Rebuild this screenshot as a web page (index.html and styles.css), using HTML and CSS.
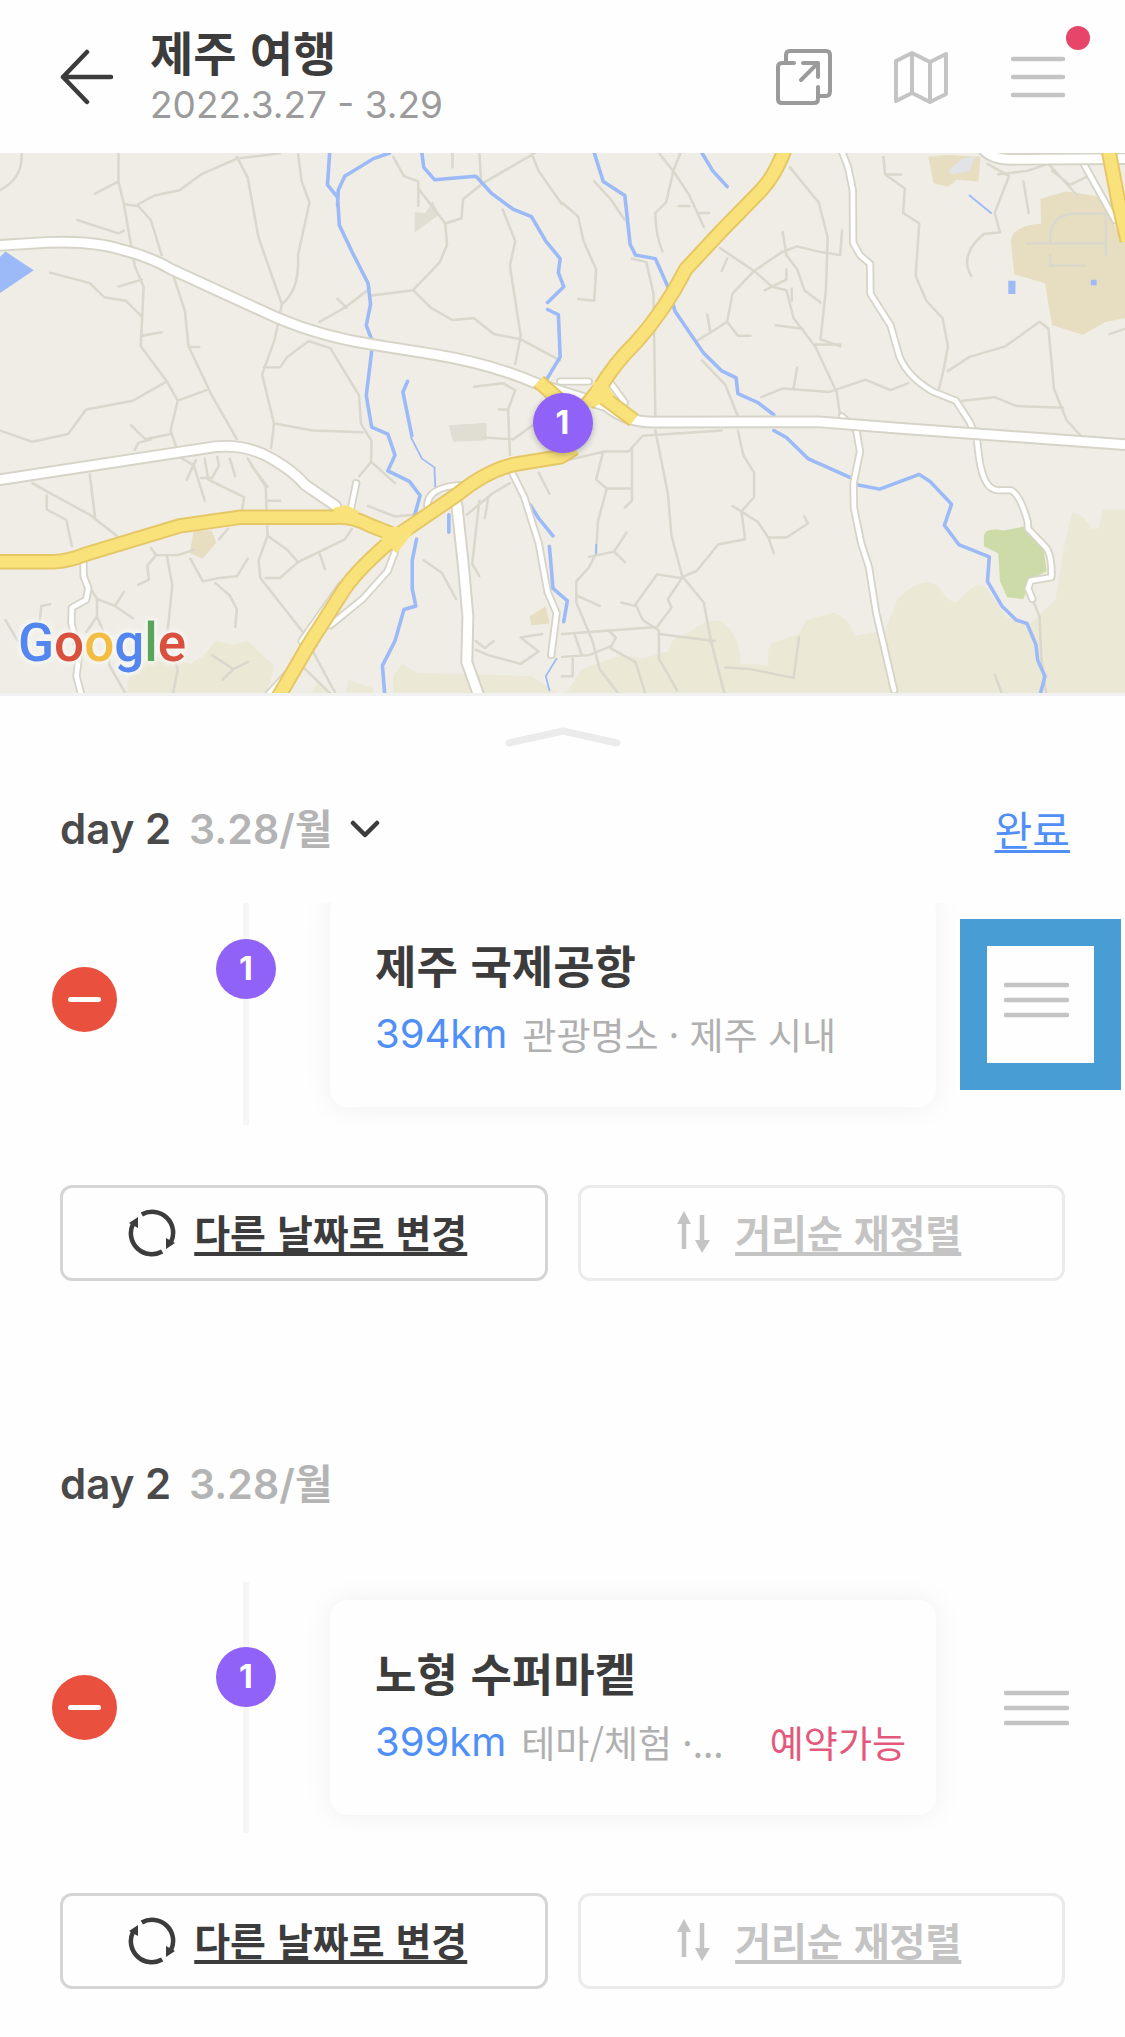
FILE: index.html
```html
<!DOCTYPE html>
<html lang="ko">
  <head>
    <meta charset="UTF-8" />
    <meta name="viewport" content="width=device-width, initial-scale=1.0" />
    <title>제주 여행</title>
    <link rel="stylesheet" href="styles.css">
  </head>
  <body>
    <header class="header">
      <button class="icon-btn back" aria-label="뒤로">
        <svg viewBox="0 0 56 56"><path d="M52 28H4M28 3L4 28l24 25" stroke="#3c3c3c" stroke-width="4.5" /></svg>
      </button>
      <div class="trip">
        <h1>제주 여행</h1>
        <p>2022.3.27 - 3.29</p>
      </div>
      <nav class="actions">
        <button class="icon-btn" aria-label="공유">
          <svg viewBox="0 0 56 56" stroke="#9b9b9b" stroke-width="4">
            <path d="M18 14H6q-4 0-4 4v32q0 4 4 4h32q4 0 4-4V38M10 12V6q0-4 4-4h36q4 0 4 4v36q0 5-4 5h-7M27 14h15v14M25 31l16-16" />
          </svg>
        </button>
        <button class="icon-btn" aria-label="지도">
          <svg viewBox="0 0 56 56" stroke="#c4c4c4" stroke-width="4">
            <path d="M3 12l16-8 18 9 16-8v40l-16 8-18-9-16 8zM19 4v40M37 13v40" />
          </svg>
        </button>
        <button class="icon-btn menu" aria-label="메뉴">
          <svg viewBox="0 0 56 56" stroke="#c4c4c4" stroke-width="4.5"><path d="M3 10h50M3 28h50M3 46h50" /></svg>
          <span class="badge"></span>
        </button>
      </nav>
    </header>

    <section class="map">
      <svg viewBox="0 9 3133 1539" preserveAspectRatio="none">
        <defs>
          <g id="white-roads">
            <path d="M0 272L130 264Q260 258 340 285Q420 305 480 342L770 478Q900 535 1050 557L1210 583Q1370 610 1500 668L1690 730" />
            <path d="M0 940L600 846Q690 838 760 882Q820 918 850 955L935 1015" />
            <path d="M1690 730Q1740 775 1820 776L2280 775L2500 793L3133 840" />
            <path d="M2740 0Q2760 25 2810 27L3133 25" />
            <path d="M1272 1010L1290 1180L1303 1330L1300 1460L1335 1560" />
          </g>
          <g id="small-roads">
            <path d="M232 1165L233 1215L246 1250L240 1282L200 1305L199 1350L220 1440L213 1500L228 1560" />
            <path d="M1100 1145L1080 1200L1010 1280L920 1355M950 1240L840 1400M875 1410L740 1560" />
            <path d="M1190 1015Q1190 960 1285 955M1424 915L1460 990L1500 1120L1525 1260L1550 1320L1535 1440" />
            <path d="M992 950L978 1020" />
            <path d="M2343 0L2362 50L2375 115L2376 265L2395 300L2423 325L2424 410L2480 500L2505 590Q2530 650 2600 690L2662 715L2700 775L2720 820L2727 880Q2740 970 2780 970L2815 970Q2840 980 2862 1060L2863 1080L2910 1130Q2930 1150 2928 1218L2870 1228L2863 1250L2875 1280" />
            <path d="M2345 760L2385 800L2395 860L2377 950L2378 1020L2398 1120L2420 1190L2440 1320L2490 1540" />
            <path d="M1690 650L1740 720M3010 25L3105 200M1560 660H1640" />
          </g>
          <g id="highways">
            <path d="M0 1174H150Q190 1172 240 1152L500 1072L670 1047H930Q980 1042 1030 1070L1105 1100" />
            <path d="M775 1560L860 1410L960 1250Q1000 1190 1105 1100L1270 985Q1360 910 1440 895L1560 875L1600 850" />
            <path d="M2185 0Q2160 70 2120 115L2010 230L1910 340Q1850 460 1770 550Q1710 610 1670 680L1635 725" />
            <path d="M1500 660L1560 715M1660 690L1765 770" />
            <path d="M3087 0L3115 150L3140 260" />
          </g>
        </defs>

        <rect y="0" width="3133" height="1560" fill="#efede6" />

        <!-- parks, fields and buildings -->
        <g fill="#ebe8d6">
          <path d="M355 1560V1515L400 1455L450 1440L530 1465L570 1440L600 1400L650 1410L690 1400L730 1440L765 1470L740 1560z" />
          <path d="M1095 1560V1500L1120 1465L1160 1490L1480 1500L1570 1560M860 1560L885 1520L930 1550M970 1510L1040 1535V1560H960z" />
          <path d="M1570 1560L1620 1480L1730 1440L1790 1450L1860 1430L1875 1395L1920 1375Q1970 1330 2010 1345Q2060 1380 2063 1465L2140 1470Q2130 1400 2170 1400L2225 1380L2245 1340L2320 1320Q2365 1330 2380 1385L2465 1370L2500 1280Q2570 1210 2615 1245Q2645 1300 2670 1285Q2710 1230 2745 1245L2800 1330L2870 1350L2940 1280L2960 1150L2985 1035Q3010 1030 3040 1080L3060 1080L3070 1025H3133V1560z" />
        </g>
        <path d="M2740 1100Q2745 1075 2795 1085L2855 1073L2865 1100L2905 1130L2915 1200L2870 1225L2850 1280L2805 1275L2785 1230L2780 1150L2740 1130z" fill="#cddba8" />
        <g fill="#e7dec1">
          <path d="M2897 140L2970 118L3070 135L3110 230H3133V480L3080 490L3015 527L2930 500L2910 380L2825 355L2815 260Q2820 215 2900 210z" />
          <path d="M2585 20L2640 15L2730 20L2725 90L2665 85L2640 105L2600 95zM540 1085L590 1085L602 1120L565 1165L528 1150zM1475 1330L1520 1300L1530 1350L1480 1355z" />
        </g>
        <g fill="#e0ddd3">
          <path d="M1155 178L1185 180L1205 145L1223 185L1155 235zM1250 785L1355 778L1355 828L1262 832z" />
        </g>
        <path d="M2640 60L2680 25L2715 20L2700 60L2650 70z" fill="#e2e3e6" />
        <path d="M0 305L15 290L94 343L0 408zM2808 373h20v38h-20zM3038 370h16v16h-16z" fill="#9bbaf7" />

        <!-- lanes -->
        <g class="lanes">
          <path d="M60 9Q65 80 0 115M330 9V90L265 125M330 90L345 155L375 330L400 390L392 560L465 660L495 715L475 800L495 860M345 155L385 160L420 200L450 300M385 155L430 130L500 115L560 70L660 25L780 10M660 20L690 80L720 250L785 440M830 9L840 90L862 150L830 300Q835 400 785 440L765 540L730 640L763 780L755 850M215 200L330 238L345 230" />
          <path d="M140 350L250 380L290 420L350 430L395 475M480 350L515 460L525 560L590 700L660 825M0 800L90 832L190 810L240 740L370 715L465 660M495 715L575 685M365 785L405 825L475 810M375 855L385 835L420 825M330 390L395 370M395 530L450 520M525 562H555" />
          <path d="M735 620H780L800 590L860 545L920 565L970 650L1000 700L1005 780L1035 830L1033 890L1000 930M765 780L870 800L1010 805M890 490L960 450L1030 395M940 425L965 450M1035 415L1150 400L1225 320L1245 270L1240 210L1285 195L1290 140L1345 95L1490 9M1150 400L1200 450L1260 485L1320 480L1375 525L1450 540L1560 600M1095 20L1125 75L1165 90L1165 160M1165 110L1240 210M1260 10V50M1335 9L1340 95M1480 9L1500 60L1565 155M1400 170L1435 260L1420 330L1450 530L1435 610" />
          <path d="M90 950L160 990L250 1040L325 1100M250 925L265 1050M130 985V1025L185 1055L200 1130M500 875L540 900L570 1000M570 880L580 940L640 970L680 990L670 1050M640 880L655 930M690 880L740 960L745 1100L800 1140L830 1175M545 885L520 940M560 935H590L610 900L605 875M745 1100L720 1170L725 1220L840 1370L940 1560M530 1165L565 1230L610 1220L660 1215L690 1165M740 1220H780L830 1175L960 1110L980 1080M600 1235L640 1270L660 1310L655 1360M890 1150L905 1195M635 1080L610 1110M420 1135L435 1155H495L540 1140M435 1155L410 1185L415 1225L385 1240M465 1160L480 1240L465 1390L495 1480L480 1560" />
          <path d="M240 1230L270 1280V1330L300 1400L305 1470L350 1550M270 1330L240 1375M270 1280L320 1300L370 1335M320 1300L345 1260M15 1340L50 1400M140 1295L115 1300L110 1350M830 1460L920 1550M590 1440L650 1480L690 1460M650 1480L620 1510M745 1000H780M745 960L700 900M1035 890L1100 950M1025 1015L1100 1045L1150 1040M1180 1170L1230 1205L1270 1280M1300 1040L1370 980L1420 950M1335 1000L1315 1180L1335 1215M1360 990L1350 1050M1500 920L1530 980M1320 675L1400 665L1435 685L1415 740L1420 870M1325 1425L1360 1440L1450 1465L1500 1430L1450 1390L1510 1380M1325 1400L1350 1420L1375 1400M1345 820L1430 825L1490 780M1390 740H1415" />
          <path d="M1565 150L1610 190L1625 260L1660 340L1655 430L1610 425M1835 9L1875 60L1855 150L1825 180Q1825 240 1845 290M1895 9L1875 60L1920 130L1960 220M1655 90L1700 140L1740 200M1760 310L1800 320L1820 410L1825 760M2005 280L2100 345L2150 390L2190 400L2210 480L2270 560L2330 690L2340 760M2200 50L2280 150L2305 250L2300 400L2285 540L2340 560M2220 200" />
          <path d="M1940 545L1980 520L2025 490L2040 410L2100 345L2180 290L2220 275L2280 290L2340 300L2345 230M2025 490L2055 530H2090M1970 470L1978 520M2180 235L2190 300L2220 340L2240 400L2285 435M2160 500L2235 510M2270 555H2340M2010 345L2025 310M1890 160H1920M1945 180H1975M2130 400L2190 370V340M2205 430V395M1955 600L2020 670L2055 760M2120 705L2180 680L2310 690L2410 655L2480 685L2530 665M2220 620L2210 680" />
          <path d="M2460 20L2465 70L2520 110L2515 180L2560 210L2550 360L2580 430L2625 480L2640 560L2625 640L2615 680M2465 70H2510M2750 40L2810 75L2770 180L2785 235L2740 240Q2670 300 2705 360M2780 70L2860 60L2920 40L3000 130M2850 90L2865 180M2930 60L2980 100L3040 70M2640 630L2700 590L2800 560L2895 490L2920 510L2935 680L2970 770L3010 815M2680 715L2770 705L2830 730L2960 735" />
          <path d="M2925 265Q2920 180 3000 182H3080V300M2860 267H3080M2925 300V330H3020M3090 525L3133 510" />
          <path d="M1825 800L1860 980L1870 1100L1900 1215L1960 1290L1980 1400L2020 1560M1580 885L1680 860H1750L1790 815L2010 800M1680 860L1660 940L1690 965H1760V850M1690 965L1665 1060L1660 1150L1640 1190L1605 1230V1290L1650 1400L1670 1480L1730 1560M1760 965V1000L1740 1020M2055 800L2070 870L2100 920L2100 990L2065 1030L2075 1110L2000 1125L1940 1200L1895 1220L1830 1210L1770 1295L1790 1340L1835 1370V1450L1885 1540M2040 1015L2110 1060L2140 1105H2190L2250 1065L2240 1045M2140 1105L2155 1150" />
          <path d="M1640 1160L1710 1145L1745 1090M1710 1145L1740 1175M1900 1220L1860 1280L1870 1305L1830 1360L1565 1380M1605 1270L1670 1300M1730 1290L1770 1300M1835 1380L1990 1400M1695 1370L1715 1390L1700 1420L1770 1460L1800 1560M1565 1445L1640 1440L1700 1415M2020 1475L2090 1480L2210 1505L2225 1390M2875 1280L2895 1330L2900 1450L2915 1560M2770 1495L2790 1550M1600 1380L1620 1440M1565 1500H1595V1450" />
        </g>

        <!-- rivers -->
        <g class="rivers">
          <path d="M918 9L912 100L940 135L945 215L980 290L1025 380L1032 440L1020 500L1035 540M1085 9L1040 25L960 75L942 115L940 160M1175 9L1180 50L1210 85L1325 75L1370 125L1430 170L1480 190L1520 260L1560 310L1555 350L1570 390L1525 435M1525 455L1555 470L1560 590L1525 650" />
          <path d="M1035 575L1020 700L1035 790L1080 810L1100 870L1080 915L1140 945L1170 985L1155 1040M1135 660L1122 690L1147 815M1250 1040V1090M1160 1110L1148 1170V1250L1158 1300L1125 1310L1100 1400L1065 1470L1072 1560M1475 1010L1500 1050L1540 1100M1530 1130L1540 1250L1580 1285L1570 1345" />
          <path d="M1655 9L1680 90L1740 130L1755 270L1770 300L1825 310L1860 390L1880 460L1960 580L2010 630L2050 650L2055 695L2110 720L2155 755M1955 9L1985 60L2025 105M2155 800L2190 820L2250 880L2370 935M2390 955L2450 967L2560 925L2590 945L2650 1010L2630 1070L2670 1125L2755 1160L2750 1230L2790 1300L2830 1340L2860 1350L2885 1410L2890 1455L2910 1500L2895 1560" />
          <path class="thin" d="M1145 820L1175 880L1210 905L1212 960M2700 130L2760 180M1660 1125V1150M1550 1450L1520 1500L1530 1540" />
        </g>

        <use href="#small-roads" class="casing small" />
        <use href="#small-roads" class="small white" />
        <use href="#white-roads" class="casing wide" />
        <use href="#white-roads" class="wide white" />
        <use href="#highways" class="highway-casing" />
        <use href="#highways" class="highway" />
        <path d="M1085 1075L1120 1075L1150 1090L1105 1150L1060 1110zM930 1020L965 1012L1000 1030L990 1060H930zM1655 660L1690 665L1710 700L1660 730L1630 735z" fill="#f9e27a" />
      </svg>
      <span class="pin">1</span>
      <div class="google" aria-label="Google"><span class="b">G</span><span class="r">o</span><span class="y">o</span><span class="b">g</span><span class="g">l</span><span class="r">e</span></div>
    </section>

    <main>
      <button class="sheet-handle" aria-label="펼치기">
        <svg viewBox="0 0 116 24"><path d="M4 17L58 5l54 12" stroke="#ebebeb" stroke-width="7" /></svg>
      </button>

      <section class="day">
        <div class="day-head">
          <h2>day 2</h2>
          <span class="date">3.28/월</span>
          <button class="toggle" aria-label="날짜 선택">
            <svg viewBox="0 0 30 20"><path d="M3 4l12 12L27 4" stroke="#3c3c3c" stroke-width="4.5" /></svg>
          </button>
          <a class="done" href="#">완료</a>
        </div>
        <div class="viewport">
          <div class="row">
            <button class="remove" aria-label="삭제"></button>
            <div class="track"><span class="dot">1</span></div>
            <article class="card">
              <h3>제주 국제공항</h3>
              <p><span class="km">394km</span><span class="place">관광명소 · 제주 시내</span></p>
            </article>
            <button class="grip highlight" aria-label="순서 변경">
              <svg viewBox="0 0 65 36"><path d="M2 3h61M2 18h61M2 33h61" stroke="#c4c4c4" stroke-width="4.5" /></svg>
            </button>
          </div>
        </div>
        <div class="buttons">
          <button class="btn">
            <svg viewBox="0 0 48 48">
              <path d="M13.8 5.5A21 21 0 0 1 43 33M34.2 42.5A21 21 0 0 1 5 15" stroke="#3c3c3c" stroke-width="4.5" stroke-linecap="butt" />
              <path d="M1 14l9-6v11zM47 34l-9 6V29z" fill="#3c3c3c" />
            </svg>
            <span>다른 날짜로 변경</span>
          </button>
          <button class="btn" disabled>
            <svg viewBox="0 0 48 48">
              <path d="M15 14v26M33 6v26" stroke="#c4c4c4" stroke-width="4.5" stroke-linecap="butt" />
              <path d="M15 2l7 13H8zM33 44l-7-13h15z" fill="#c4c4c4" />
            </svg>
            <span>거리순 재정렬</span>
          </button>
        </div>
      </section>

      <section class="day next">
        <div class="day-head">
          <h2>day 2</h2>
          <span class="date">3.28/월</span>
        </div>
        <div class="row">
          <button class="remove" aria-label="삭제"></button>
          <div class="track"><span class="dot">1</span></div>
          <article class="card">
            <h3>노형 수퍼마켙</h3>
            <p><span class="km">399km</span><span class="place">테마/체험 ·...</span><span class="booking">예약가능</span></p>
          </article>
          <button class="grip" aria-label="순서 변경">
            <svg viewBox="0 0 65 36"><path d="M2 3h61M2 18h61M2 33h61" stroke="#c4c4c4" stroke-width="4.5" /></svg>
          </button>
        </div>
        <div class="buttons">
          <button class="btn">
            <svg viewBox="0 0 48 48">
              <path d="M13.8 5.5A21 21 0 0 1 43 33M34.2 42.5A21 21 0 0 1 5 15" stroke="#3c3c3c" stroke-width="4.5" stroke-linecap="butt" />
              <path d="M1 14l9-6v11zM47 34l-9 6V29z" fill="#3c3c3c" />
            </svg>
            <span>다른 날짜로 변경</span>
          </button>
          <button class="btn" disabled>
            <svg viewBox="0 0 48 48">
              <path d="M15 14v26M33 6v26" stroke="#c4c4c4" stroke-width="4.5" stroke-linecap="butt" />
              <path d="M15 2l7 13H8zM33 44l-7-13h15z" fill="#c4c4c4" />
            </svg>
            <span>거리순 재정렬</span>
          </button>
        </div>
      </section>
    </main>
  </body>
</html>
```
FILE: styles.css
```css
* {
  box-sizing: border-box;
}

body {
  margin: 0;
  background: #fefefe;
  color: #3c3c3c;
  font-family: "Noto Sans CJK KR", sans-serif;
}

h1,
h2,
h3,
p {
  margin: 0;
}

button {
  padding: 0;
  border: none;
  background: none;
  font-family: inherit;
  color: inherit;
  cursor: pointer;
}

svg {
  display: block;
  fill: none;
  stroke-linecap: round;
  stroke-linejoin: round;
}

/* header */
.header {
  display: flex;
  align-items: center;
  height: 153px;
  padding: 0 59px;
}

.icon-btn {
  position: relative;
  width: 56px;
  height: 56px;
}

.trip {
  flex: 1;
  margin-left: 35px;
}

.trip h1 {
  margin-bottom: 8px;
  font-size: 47px;
  line-height: 48px;
  font-weight: 700;
}

.trip p {
  font-family: Inter, sans-serif;
  font-size: 37px;
  line-height: 44px;
  color: #9b9b9b;
}

.actions {
  display: flex;
  gap: 61px;
}

.badge {
  position: absolute;
  top: -23px;
  right: -24px;
  width: 24px;
  height: 24px;
  border-radius: 50%;
  background: #e8456b;
}

/* map */
.map {
  position: relative;
  border-bottom: 3px solid #f1f1f1;
}

.map svg {
  width: 100%;
  aspect-ratio: 1125 / 540;
}

.lanes {
  stroke: #dad7cc;
  stroke-width: 7;
}

.rivers {
  stroke: #9bbaf7;
  stroke-width: 10;
}

.rivers .thin {
  stroke-width: 5;
}

.white {
  stroke: #fff;
}

.wide {
  stroke-width: 25;
}

.small {
  stroke-width: 13;
}

.casing {
  stroke: #d6d3c7;
}

.casing.wide {
  stroke-width: 36;
}

.casing.small {
  stroke-width: 23;
}

.highway-casing {
  stroke: #e6c766;
  stroke-width: 44;
  stroke-linecap: butt;
}

.highway {
  stroke: #f9e27a;
  stroke-width: 33;
  stroke-linecap: butt;
}

.pin,
.dot {
  display: block;
  width: 60px;
  height: 60px;
  border-radius: 50%;
  background: #9062f8;
  color: #fff;
  font-family: Inter, sans-serif;
  font-size: 32px;
  line-height: 60px;
  font-weight: 700;
  text-align: center;
}

.pin {
  position: absolute;
  top: 50%;
  left: 50%;
  transform: translate(-50%, -50%);
  box-shadow: 0 2px 6px rgba(0, 0, 0, 0.25);
}

.google {
  position: absolute;
  left: 18px;
  bottom: 18px;
  font-family: Roboto, sans-serif;
  font-size: 53px;
  line-height: 64px;
  font-weight: 500;
  filter: drop-shadow(0 0 2px #f7f6f2) drop-shadow(0 0 2px #f7f6f2) drop-shadow(0 0 2px #f7f6f2);
}

.google .b {
  color: #5386ee;
}
.google .r {
  color: #d9503f;
}
.google .y {
  color: #f2bd42;
}
.google .g {
  color: #58a55c;
}

/* day list */
.sheet-handle {
  display: block;
  width: 116px;
  height: 24px;
  margin: 30px auto 49px;
}

.day.next {
  margin-top: 173px;
}

.day-head {
  display: flex;
  align-items: center;
  height: 60px;
  margin: 0 55px 44px 60px;
}

.next .day-head {
  margin-bottom: 68px;
}

.day-head h2,
.date {
  font-family: Inter, "Noto Sans CJK KR", sans-serif;
  font-size: 42px;
  line-height: 60px;
  font-weight: 600;
  color: #4a4a4a;
}

.day-head .date {
  margin-left: 18px;
  font-size: 41px;
  color: #b4b4b4;
}

.toggle {
  width: 30px;
  margin-left: 18px;
}

.done {
  margin-left: auto;
  padding-bottom: 3px;
  font-size: 41px;
  line-height: 60px;
  color: #4f8ff7;
  text-decoration-thickness: 3px;
  text-underline-offset: 4px;
}

/* shows only the lower part of a scrolled row */
.viewport {
  display: flex;
  align-items: flex-end;
  height: 222px;
  overflow: hidden;
}

.row {
  flex: 1;
  display: flex;
  align-items: center;
  padding: 0 56px 0 52px;
  overflow: hidden;
}

.remove {
  display: grid;
  place-items: center;
  width: 65px;
  height: 65px;
  margin-right: 99px;
  border-radius: 50%;
  background: #ea503e;
}

.remove::before {
  content: "";
  width: 33px;
  height: 5px;
  border-radius: 3px;
  background: #fff;
}

.track {
  align-self: stretch;
  padding-top: 65px;
  background: linear-gradient(#f6f6f6, #f6f6f6) center / 6px 100% no-repeat;
}

.card {
  flex: 1;
  min-width: 0;
  margin: 18px 68px 18px 54px;
  padding: 44px 30px 41px 45px;
  border-radius: 18px;
  background: #fefefe;
  box-shadow: 0 0 30px rgba(0, 0, 0, 0.06);
}

.card h3 {
  margin-bottom: 8px;
  font-size: 45px;
  line-height: 58px;
  font-weight: 700;
}

.card p {
  display: flex;
  align-items: center;
  font-size: 37px;
  line-height: 64px;
  white-space: nowrap;
}

.km {
  margin-right: 15px;
  font-family: Inter, sans-serif;
  font-size: 40px;
  color: #4f8ff7;
}

.place {
  color: #b0b0b0;
}

.booking {
  margin-left: auto;
  color: #e4587c;
}

.grip {
  position: relative;
  width: 65px;
}

/* frame round the drag handle */
.highlight::after {
  content: "";
  position: absolute;
  inset: -63px -52px -72px -44px;
  border: 27px solid #489ed4;
}

.buttons {
  display: grid;
  grid-template-columns: 1fr 1fr;
  gap: 30px;
  margin: 60px 60px 0;
}

.btn {
  display: flex;
  justify-content: center;
  align-items: center;
  gap: 18px;
  height: 96px;
  padding-right: 12px;
  border: 3px solid #d5d5d5;
  border-radius: 12px;
  font-size: 39px;
  font-weight: 700;
}

.btn svg {
  width: 48px;
  height: 48px;
}

.btn span {
  padding-bottom: 4px;
  text-decoration: underline;
  text-decoration-thickness: 4px;
  text-underline-offset: 4px;
}

.btn:disabled {
  border-color: #ebebeb;
  color: #c4c4c4;
  cursor: default;
}
```
